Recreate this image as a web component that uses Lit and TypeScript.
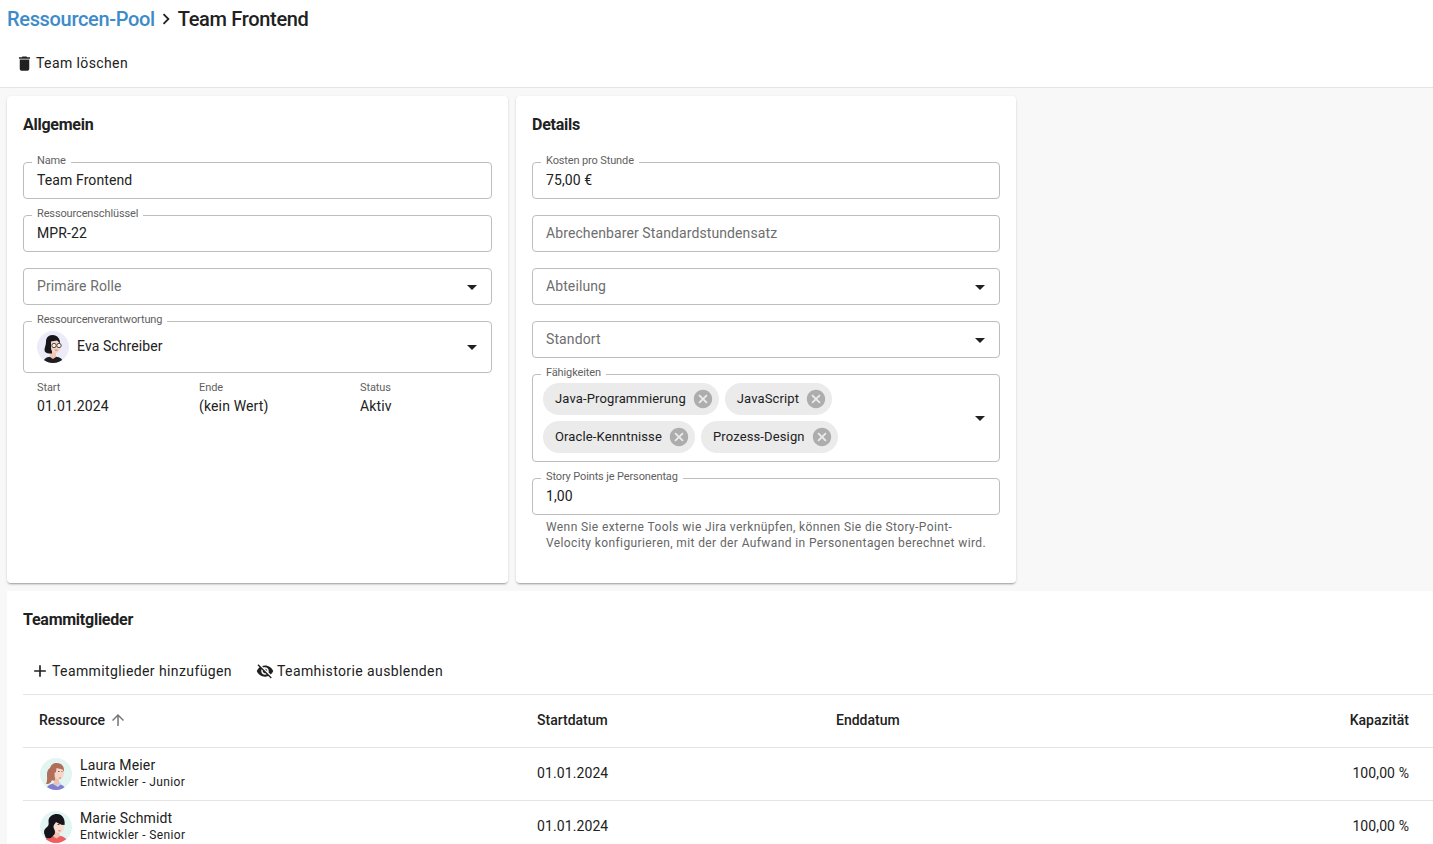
import { LitElement, html, css } from "lit";
import { customElement } from "lit/decorators.js";

const icon = (d: string, cls = "") => html`<svg class="ic ${cls}" viewBox="0 0 24 24"><path d=${d}></path></svg>`;
const TRASH = "M6 19c0 1.1.9 2 2 2h8c1.1 0 2-.9 2-2V7H6v12zM19 4h-3.5l-1-1h-5l-1 1H5v2h14V4z";
const ADD = "M19 13h-6v6h-2v-6H5v-2h6V5h2v6h6v2z";
const EYE_OFF = "M12 7c2.76 0 5 2.24 5 5 0 .65-.13 1.26-.36 1.83l2.92 2.92c1.51-1.26 2.7-2.89 3.43-4.75-1.73-4.39-6-7.5-11-7.5-1.4 0-2.74.25-3.98.7l2.16 2.16C10.74 7.13 11.35 7 12 7zM2 4.27l2.28 2.28.46.46C3.08 8.3 1.78 10.02 1 12c1.73 4.39 6 7.5 11 7.5 1.55 0 3.03-.3 4.38-.84l.42.42L19.73 22 21 20.73 3.27 3 2 4.27zM7.53 9.8l1.55 1.55c-.05.21-.08.43-.08.65 0 1.66 1.34 3 3 3 .22 0 .44-.03.65-.08l1.55 1.55c-.67.33-1.41.53-2.2.53-2.76 0-5-2.24-5-5 0-.79.2-1.53.53-2.2zm4.31-.78l3.15 3.15.02-.16c0-1.66-1.34-3-3-3l-.17.01z";
const UP = "M4 12l1.41 1.41L11 7.83V20h2V7.83l5.58 5.59L20 12l-8-8-8 8z";
const CANCEL = "M12 2C6.47 2 2 6.47 2 12s4.47 10 10 10 10-4.47 10-10S17.53 2 12 2zm5 13.59L15.59 17 12 13.41 8.41 17 7 15.59 10.59 12 7 8.41 8.41 7 12 10.59 15.59 7 17 8.41 13.41 12 17 15.59z";
const CHEV = "M10 6L8.59 7.41 13.17 12l-4.58 4.59L10 18l6-6z";

const eva = html`<svg class="av" viewBox="0 0 32 32"><defs><clipPath id="a1"><circle cx="16" cy="16" r="16"></circle></clipPath></defs><g clip-path="url(#a1)">
<rect width="32" height="32" fill="#ecebf7"></rect>
<path d="M6 32c.5-4.500 4-6.500 10-6.500s10 2 10 6.500z" fill="#1f1d1f"></path>
<path d="M13 20h6v6l-3 2-3-2z" fill="#f3c7b4"></path>
<path d="M15.500 4c-4.500 0-6.500 3-6.500 7 0 3-1.500 5.500-1.500 8 0 2 2 3.500 5 3.500h2.500V11l5.500-1 2.500 3c.5-5-2.500-9-7.500-9z" fill="#17151a"></path>
<path d="M14 10.500l6-1 3.500 3.500c0 5-1.500 9-5 9S14 19 14 16z" fill="#f6d3c3"></path>
<circle cx="17" cy="14.500" r="2.200" fill="#f5ede6" stroke="#3c3a3a" stroke-width=".9"></circle>
<circle cx="22" cy="14.500" r="2.200" fill="#f5ede6" stroke="#3c3a3a" stroke-width=".9"></circle>
<path d="M18 19.200h2.500" stroke="#a55" stroke-width=".7"></path>
</g></svg>`;

const laura = html`<svg class="av" viewBox="0 0 32 32"><defs><clipPath id="a2"><circle cx="16" cy="16" r="16"></circle></clipPath></defs><g clip-path="url(#a2)">
<rect width="32" height="32" fill="#e3f5f3"></rect>
<path d="M6 32c.5-4 4-6.500 9-6.500s8.500 1.500 10 4.500l1 2z" fill="#7e80cf"></path>
<path d="M13 26l5 3 3-3-1-2h-6z" fill="#cdd3f0"></path>
<path d="M14 19h5v7l-2.500 1.500L14 26z" fill="#edc1ae"></path>
<path d="M14 9l8.500-1.500c1 2 1.500 4 1.500 6 0 5-2 8-4.500 8s-5.500-3-5.500-6z" fill="#f6d6c8"></path>
<path d="M17 5c-4 0-6 2-7 5-2 1-3.500 4-3 8 .3 3 0 6-1 8 3 .5 5-1 6-4 1 1 2 1 3 0l-.5-7 1.500-1 .5-4 6 1.500 1.500 2c.5-5-2.500-8.500-7-8.500z" fill="#b06e5b"></path>
<path d="M19 20h2" stroke="#b35a4d" stroke-width=".7"></path>
<path d="M18 13.500h1.500M21.500 13.500h1" stroke="#5d4037" stroke-width=".8"></path>
</g></svg>`;

const marie = html`<svg class="av" viewBox="0 0 32 32"><defs><clipPath id="a3"><circle cx="16" cy="16" r="16"></circle></clipPath></defs><g clip-path="url(#a3)">
<rect width="32" height="32" fill="#e3f5f3"></rect>
<path d="M4 32c1-5 5-7.500 12-7.500s11 2.500 12 7.500z" fill="#f05f5f"></path>
<path d="M14 19h5.500v6.500l-3 2-3-2z" fill="#f0c4b2"></path>
<path d="M14 9l8.500-1.500 2 5.500c0 5-1.500 9-5.500 9s-5-3-5-7z" fill="#f8dccf"></path>
<path d="M17 3c-4.500 0-8 2.500-8.500 6.500-.2 2 .8 3.500-.5 5.500-1.500 1.500-4 3-4 6 0 2.500 1.500 3.500 1.500 5.500 2 1.500 5.500 1 7-1s2.500-2 2.500-4.500c0-2.500-1.500-3-1.500-5.500 0-1.500 1.500-3 2.500-4.500 2 1.500 5 3 8.500 3 1-4.500-1.500-11-7.500-11z" fill="#15141b"></path>
<path d="M18.500 19.800h2" stroke="#c0564a" stroke-width=".8"></path>
<path d="M17.500 13.500h2M21.500 13.500h1.200" stroke="#222" stroke-width=".8"></path>
</g></svg>`;

@customElement("app-root")
export class AppRoot extends LitElement {
  static styles = css`
    :host { display: block; height: 844px; overflow: hidden; background: #f8f8f8; color: #212121;
      font-family: Roboto, "Liberation Sans", sans-serif; font-size: 14px; letter-spacing: .1px; }
    * { box-sizing: border-box; }
    .ic { width: 24px; height: 24px; fill: currentColor; flex: none; display: block; }
    .head { background: #fff; height: 88px; border-bottom: 1px solid #e4e4e4; padding: 0 7px; }
    .crumbs { display: flex; align-items: center; height: 38px; font-size: 20px; font-weight: 500; letter-spacing: -.33px; }
    .crumbs a { color: #3d8bc9; }
    .crumbs .ic { width: 22px; height: 22px; margin: 0 1px 0 0; }
    .btn { display: inline-flex; align-items: center; height: 36px; white-space: nowrap; letter-spacing: .4px; }
    .actions { display: flex; align-items: center; height: 36px; margin-top: 7px; padding-left: 7.500px; letter-spacing: .4px; }
    .actions .ic { width: 19px; height: 19px; margin: 1px 2.500px 0 0; }
    .cards { display: flex; gap: 8px; padding: 8px 7px; }
    .card { background: #fff; border-radius: 4px; box-shadow: 0 2px 2px -1px rgba(0,0,0,.3), 0 1px 3px rgba(0,0,0,.12); width: 501px; height: 487px; padding: 17px 16px 16px; }
    .card + .card { width: 500px; }
    h2 { margin: 0; font-size: 16px; font-weight: 700; line-height: 24px; letter-spacing: -.25px; }
    .fields { display: flex; flex-direction: column; gap: 16px; margin-top: 25px; }
    .f { position: relative; min-height: 37px; border: 1px solid #bdbdbd; border-radius: 4px; display: flex; align-items: center; padding: 0 13px 2px; }
    .f.ph { color: #6e6e6e; }
    .f label { position: absolute; left: 8px; top: -9px; background: #fff; padding: 0 5px; font-size: 11px; line-height: 13px; letter-spacing: -.13px; color: #5f5f5f; white-space: nowrap; }
    .caret { position: absolute; right: 14px; top: 50%; margin-top: -2px; width: 0; height: 0; border-left: 5px solid transparent; border-right: 5px solid transparent; border-top: 5px solid #212121; }
    .owner { height: 52px; gap: 8px; padding-bottom: 0; }
    .owner span { margin-bottom: 2px; }
    .av { width: 32px; height: 32px; display: block; flex: none; }
    .info { display: grid; grid-template-columns: 162px 161px 100px; padding: 0 14px; margin-top: -8px; }
    .info span { display: block; font-size: 11px; letter-spacing: -.1px; line-height: 13px; color: #5f5f5f; }
    .info b { display: block; font-weight: 400; line-height: 20px; margin-top: 2px; letter-spacing: .15px; }
    .chips { height: 88px; padding: 0 10px; display: block; }
    .chiprow { display: flex; gap: 6px; margin-top: 8px; }
    .chiprow + .chiprow { margin-top: 6px; }
    .chip { display: flex; align-items: center; height: 32px; border-radius: 16px; background: #ebebeb; padding: 0 7px 2px 12px; font-size: 13px; gap: 8px; white-space: nowrap; letter-spacing: .13px; }
    .chip .ic { width: 22px; height: 22px; margin: 2px -2px 0; color: #adadad; }
    .help { font-size: 12px; line-height: 16px; letter-spacing: .39px; color: #666; margin: -12px 10px 0 14px; }
    .team { background: #fff; margin-left: 7px; height: 300px; padding: 17px 0 0 16px; }
    .team h2 { height: 24px; }
    .tools { display: flex; align-items: center; height: 36px; margin-top: 21px; padding-left: 7px; gap: 24px; }
    .tools .add { width: 20px; height: 20px; margin-right: 2px; }
    .tools .off { width: 18px; height: 18px; margin-right: 3px; }
    .row { display: grid; grid-template-columns: 498px 299px 1fr 1fr; height: 53px; border-top: 1px solid #e4e4e4; align-items: center; padding: 0 24px 2px 16px; }
    .row > :last-child { text-align: right; }
    .row.th { font-weight: 500; margin-top: 5px; letter-spacing: 0; }
    .th .sort { display: flex; align-items: center; gap: 4px; }
    .th .ic { width: 18px; height: 18px; color: #757575; }
    .who { display: flex; align-items: center; gap: 8px; margin-left: 1px; }
    .who .av { margin-top: 2px; }
    .who b { display: block; font-weight: 400; line-height: 17px; letter-spacing: .15px; }
    .who small { display: block; font-size: 12px; line-height: 16px; letter-spacing: .38px; }
  `;

  field(label: string, value: string) {
    return html`<div class="f"><label>${label}</label>${value}</div>`;
  }
  select(ph: string) {
    return html`<div class="f ph">${ph}<i class="caret"></i></div>`;
  }
  chip(t: string) {
    return html`<div class="chip">${t}${icon(CANCEL)}</div>`;
  }
  person(av: unknown, name: string, role: string) {
    return html`<div class="row"><div class="who">${av}<div><b>${name}</b><small>${role}</small></div></div><div>01.01.2024</div><div></div><div>100,00 %</div></div>`;
  }

  render() {
    return html`
      <header class="head">
        <div class="crumbs"><a>Ressourcen-Pool</a>${icon(CHEV)}<span>Team Frontend</span></div>
        <div class="actions">${icon(TRASH)}<span>Team löschen</span></div>
      </header>
      <div class="cards">
        <section class="card">
          <h2>Allgemein</h2>
          <div class="fields">
            ${this.field("Name", "Team Frontend")}
            ${this.field("Ressourcenschlüssel", "MPR-22")}
            ${this.select("Primäre Rolle")}
            <div class="f owner"><label>Ressourcenverantwortung</label>${eva}<span>Eva Schreiber</span><i class="caret"></i></div>
            <div class="info">
              <div><span>Start</span><b>01.01.2024</b></div>
              <div><span>Ende</span><b>(kein Wert)</b></div>
              <div><span>Status</span><b>Aktiv</b></div>
            </div>
          </div>
        </section>
        <section class="card">
          <h2>Details</h2>
          <div class="fields">
            ${this.field("Kosten pro Stunde", "75,00 €")}
            <div class="f ph">Abrechenbarer Standardstundensatz</div>
            ${this.select("Abteilung")}
            ${this.select("Standort")}
            <div class="f chips"><label>Fähigkeiten</label>
              <div class="chiprow">${this.chip("Java-Programmierung")}${this.chip("JavaScript")}</div>
              <div class="chiprow">${this.chip("Oracle-Kenntnisse")}${this.chip("Prozess-Design")}</div>
              <i class="caret"></i>
            </div>
            ${this.field("Story Points je Personentag", "1,00")}
            <p class="help">Wenn Sie externe Tools wie Jira verknüpfen, können Sie die Story-Point-Velocity konfigurieren, mit der der Aufwand in Personentagen berechnet wird.</p>
          </div>
        </section>
      </div>
      <section class="team">
        <h2>Teammitglieder</h2>
        <div class="tools">
          <div class="btn">${icon(ADD, "add")}Teammitglieder hinzufügen</div>
          <div class="btn">${icon(EYE_OFF, "off")}Teamhistorie ausblenden</div>
        </div>
        <div class="row th"><div class="sort">Ressource ${icon(UP)}</div><div>Startdatum</div><div>Enddatum</div><div>Kapazität</div></div>
        ${this.person(laura, "Laura Meier", "Entwickler - Junior")}
        ${this.person(marie, "Marie Schmidt", "Entwickler - Senior")}
      </section>
    `;
  }
}
